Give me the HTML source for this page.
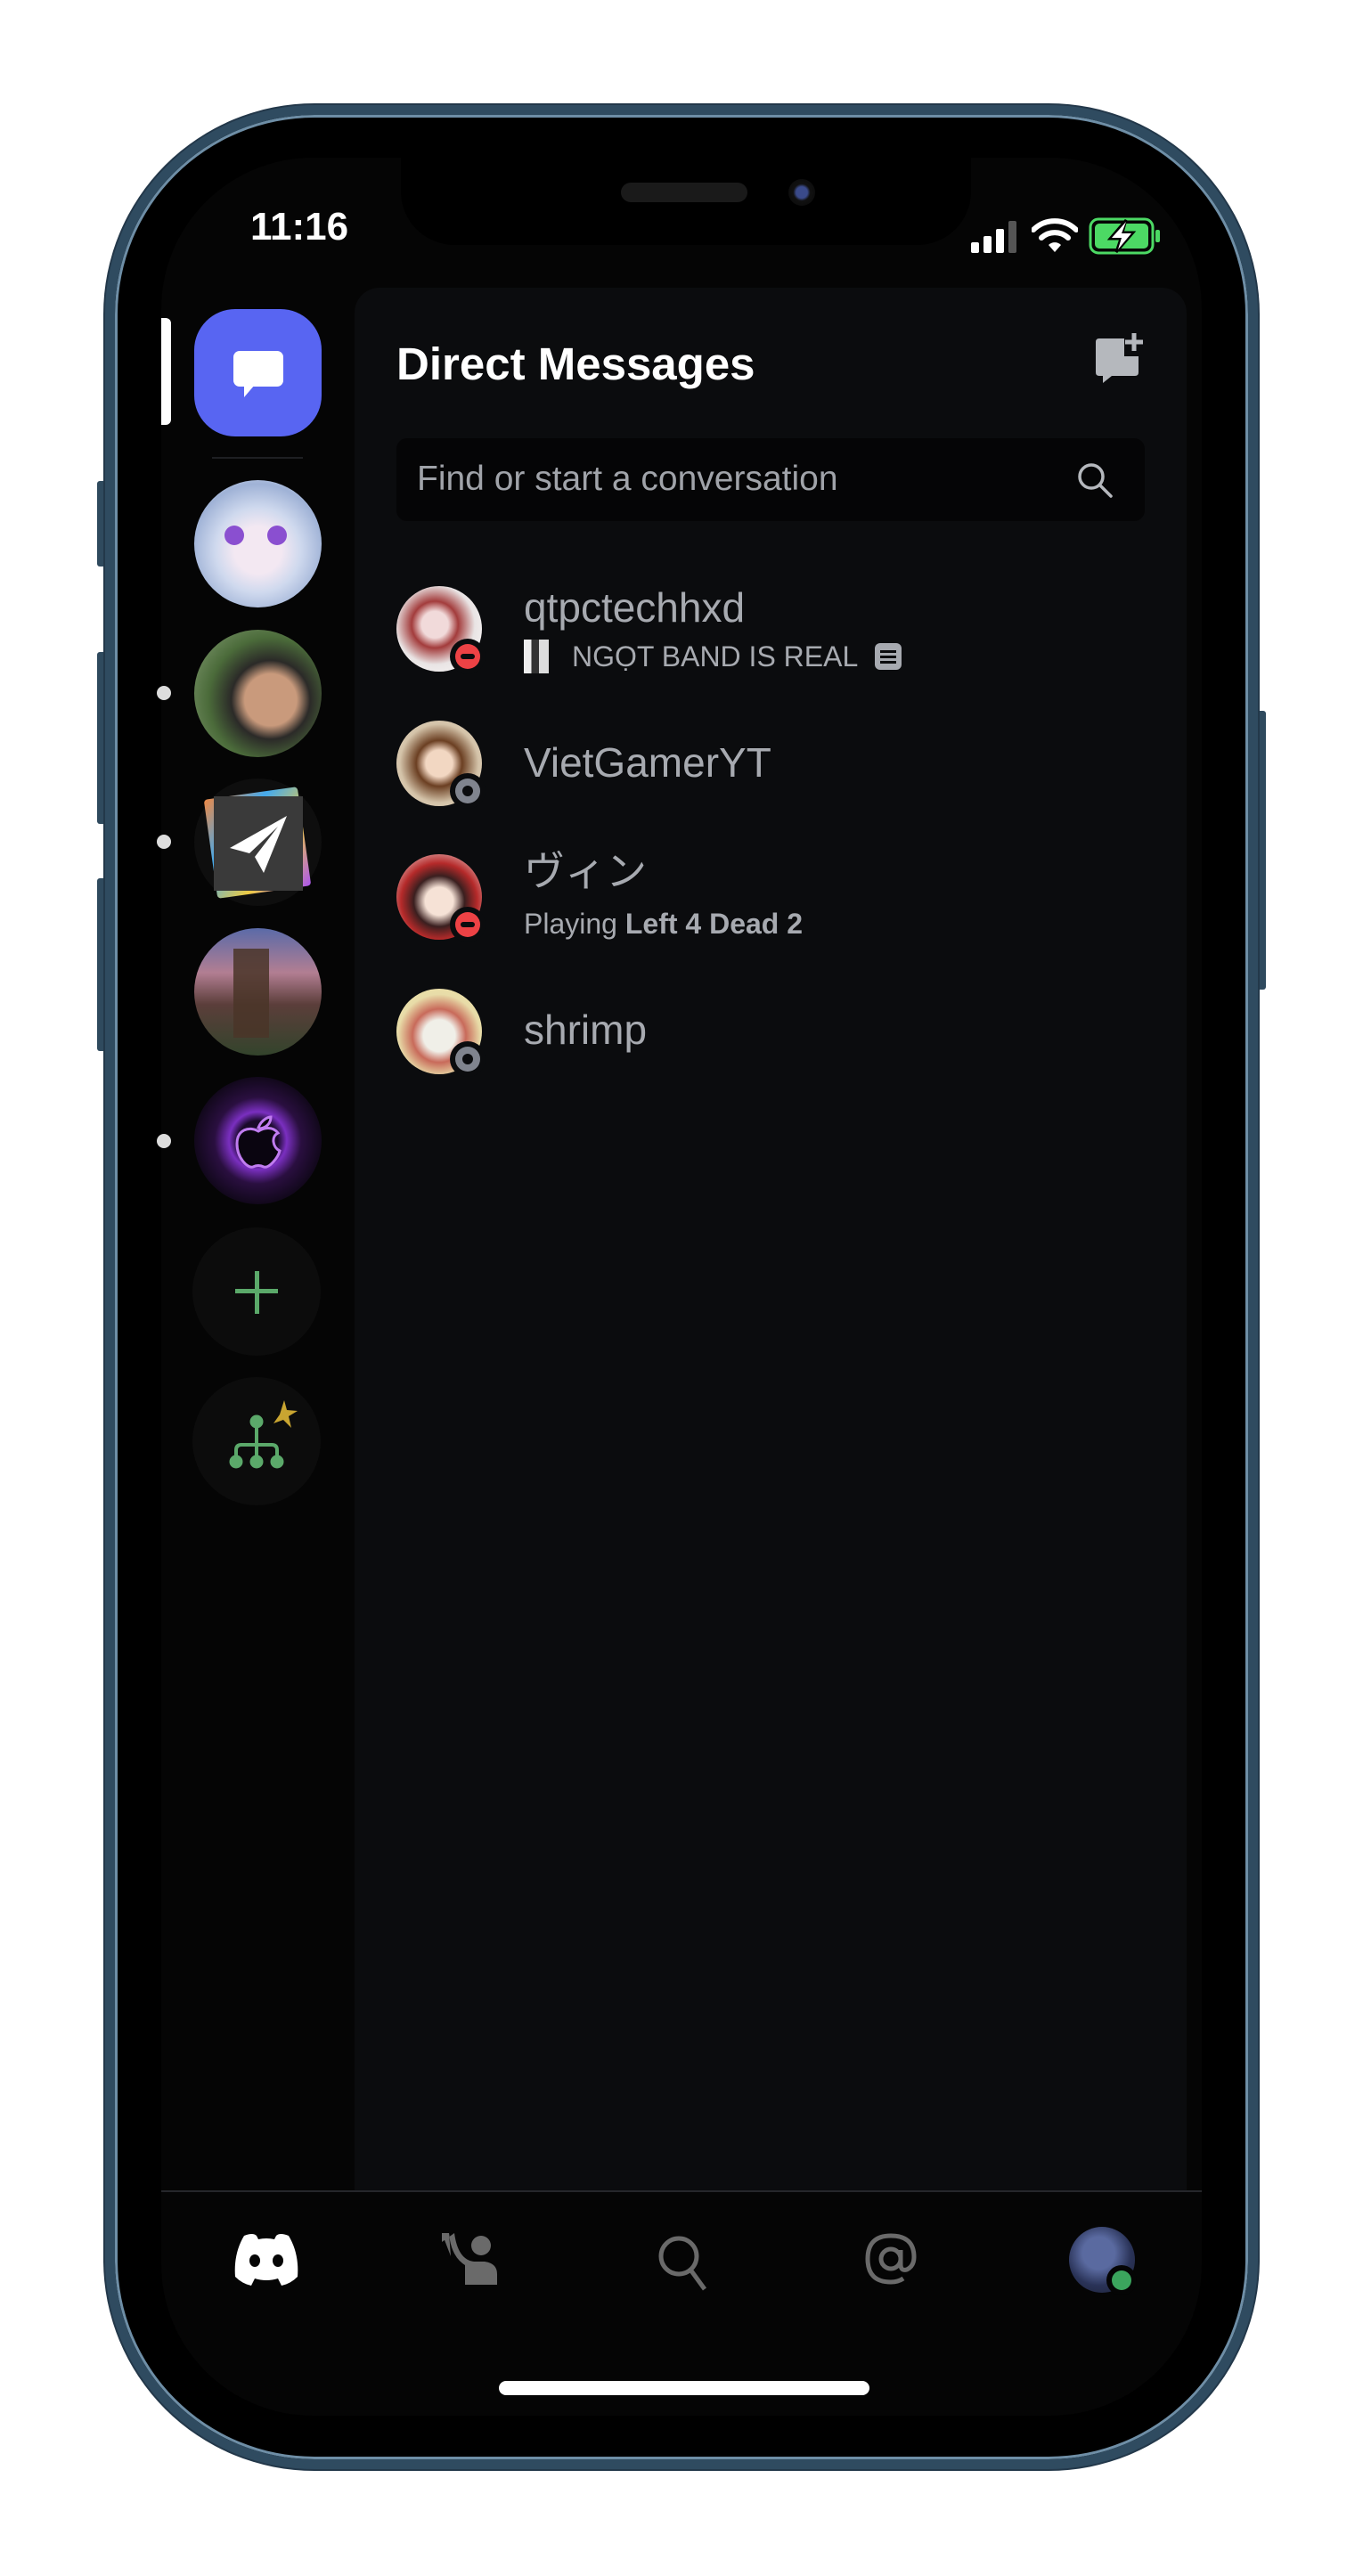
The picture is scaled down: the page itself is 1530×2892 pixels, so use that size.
<!DOCTYPE html>
<html><head><meta charset="utf-8"><style>
*{margin:0;padding:0;box-sizing:border-box}
body{width:1530px;height:2892px;background:#fff;position:relative;overflow:hidden;font-family:"Liberation Sans","Noto Sans CJK JP",sans-serif}
.abs{position:absolute}
.frame{left:118px;top:118px;width:1294px;height:2654px;border-radius:235px;background:#000;border:11px solid #2f4b60;box-shadow:inset 0 0 0 3px #6e8ea6, 0 0 0 2px #23384a}
.screen{left:181px;top:177px;width:1168px;height:2535px;border-radius:170px;background:#050505;overflow:hidden}
.btn{background:#2f4a5e;border-radius:3px}
.panel{left:398px;top:323px;width:934px;height:2137px;background:#0b0c0e;border-radius:28px 28px 0 0}
.circ{border-radius:50%}
.name{position:absolute;left:588px;color:#a7aab0;font-size:46px;line-height:1}
.sub{position:absolute;left:588px;color:#a7aab0;font-size:32px;line-height:1}
.badge{position:absolute;width:40px;height:40px;border-radius:50%;background:#0b0c0e}
.badge i{position:absolute;left:6px;top:6px;width:28px;height:28px;border-radius:50%}
</style></head><body>
<div class="abs btn" style="left:109px;top:540px;width:10px;height:96px"></div>
<div class="abs btn" style="left:109px;top:732px;width:10px;height:193px"></div>
<div class="abs btn" style="left:109px;top:986px;width:10px;height:194px"></div>
<div class="abs btn" style="left:1411px;top:798px;width:10px;height:313px"></div>
<div class="abs frame"></div>
<div class="abs screen"></div>
<div class="abs" style="left:450px;top:170px;width:640px;height:105px;background:#000;border-radius:0 0 60px 60px"></div>
<div class="abs" style="left:697px;top:205px;width:142px;height:22px;background:#1a1a1a;border-radius:11px"></div>
<div class="abs circ" style="left:885px;top:201px;width:30px;height:30px;background:radial-gradient(circle,#3a4a8a 0 30%,#111 45%,#080808)"></div>
<div class="abs" style="left:281px;top:230px;color:#fff;font-size:44px;font-weight:bold;letter-spacing:0px">11:16</div>
<svg class="abs" style="left:1090px;top:248px" width="56" height="36"><rect x="0" y="24" width="9" height="12" rx="2" fill="#fff"/><rect x="14" y="17" width="9" height="19" rx="2" fill="#fff"/><rect x="28" y="9" width="9" height="27" rx="2" fill="#fff"/><rect x="42" y="0" width="9" height="36" rx="2" fill="#555"/></svg>
<svg class="abs" style="left:1158px;top:245px" width="52" height="40" viewBox="0 0 52 40"><path d="M2 13 A34 34 0 0 1 50 13" stroke="#fff" stroke-width="6" fill="none" stroke-linecap="round"/><path d="M11 22 A22 22 0 0 1 41 22" stroke="#fff" stroke-width="6" fill="none" stroke-linecap="round"/><path d="M19 30 L26 38 L33 30 A10 10 0 0 0 19 30Z" fill="#fff"/></svg>
<svg class="abs" style="left:1222px;top:244px" width="82" height="42"><rect x="2" y="2" width="70" height="38" rx="9" fill="none" stroke="#4cd964" stroke-width="3"/><rect x="7" y="7" width="60" height="28" rx="5" fill="#4cd964"/><rect x="75" y="14" width="5" height="14" rx="2" fill="#4cd964"/><path d="M42 3 L24 24 H36 L31 39 L50 17 H38 Z" fill="#000" stroke="#000" stroke-width="3"/><path d="M42 5 L26 23 H37 L33 36 L48 18 H37 Z" fill="#fff"/></svg>
<div class="abs panel"></div>
<div class="abs" style="left:181px;top:357px;width:11px;height:120px;background:#fff;border-radius:0 6px 6px 0"></div>
<div class="abs" style="left:218px;top:347px;width:143px;height:143px;border-radius:46px;background:#5865f2"></div>
<svg class="abs" style="left:258px;top:388px" width="64" height="64" viewBox="0 0 64 64"><rect x="4" y="6" width="56" height="40" rx="7" fill="#fff"/><path d="M16 44 L16 58 L28 44Z" fill="#fff"/></svg>
<div class="abs" style="left:238px;top:513px;width:102px;height:2px;background:#1e1f22"></div>
<div class="abs circ" style="left:218px;top:539px;width:143px;height:143px;background:radial-gradient(circle at 50% 55%,#f3e8f2 0 25%,#cfd9ee 45%,#9fb2d6 70%,#e8eef7)"></div>
<div class="abs circ" style="left:252px;top:590px;width:22px;height:22px;background:#8a4fd0"></div>
<div class="abs circ" style="left:300px;top:590px;width:22px;height:22px;background:#8a4fd0"></div>
<div class="abs circ" style="left:218px;top:707px;width:143px;height:143px;background:radial-gradient(circle at 60% 55%,#c99a7c 0 25%,#2b2a28 38%,#4b6b3a 60%,#8aa27a)"></div>
<div class="abs circ" style="left:218px;top:874px;width:143px;height:143px;background:#0e0e0e"></div>
<div class="abs" style="left:236px;top:890px;width:106px;height:112px;background:linear-gradient(135deg,#e84 ,#4ae,#ec4,#a5e);transform:rotate(-8deg);border-radius:4px"></div>
<div class="abs" style="left:240px;top:894px;width:100px;height:106px;background:#3a3a3a"></div>
<svg class="abs" style="left:250px;top:908px" width="80" height="80" viewBox="0 0 80 80"><path d="M72 8 L8 44 L30 50 L62 20 L36 54 L46 72 Z" fill="#fff"/></svg>
<div class="abs circ" style="left:218px;top:1042px;width:143px;height:143px;background:linear-gradient(180deg,#5a6aa8 0%,#b27e92 35%,#5b3e3a 60%,#33442c 100%)"></div>
<div class="abs" style="left:262px;top:1065px;width:40px;height:100px;background:#4a3528;opacity:.85"></div>
<div class="abs circ" style="left:218px;top:1209px;width:143px;height:143px;background:radial-gradient(circle,#1a0a2a 0 22%,#7a2fc0 32%,#2a0f40 48%,#12081c 70%)"></div>
<svg class="abs" style="left:262px;top:1250px" width="56" height="64" viewBox="0 0 56 64"><path d="M28 16 C32 6 40 4 42 4 C42 10 38 16 30 17Z M28 20 C18 14 4 18 4 34 C4 50 16 62 22 60 C26 58 30 58 34 60 C40 62 50 50 52 42 C44 38 42 26 50 22 C44 14 34 16 28 20Z" fill="#0a0510" stroke="#c07cf0" stroke-width="3"/></svg>
<div class="abs circ" style="left:184px;top:770px;width:16px;height:16px;background:#ddd;margin-left:-8px"></div>
<div class="abs circ" style="left:184px;top:937px;width:16px;height:16px;background:#ddd;margin-left:-8px"></div>
<div class="abs circ" style="left:184px;top:1273px;width:16px;height:16px;background:#ddd;margin-left:-8px"></div>
<div class="abs circ" style="left:216px;top:1378px;width:144px;height:144px;background:#0c0c0c"></div>
<div class="abs" style="left:264px;top:1447px;width:48px;height:5px;background:#5ba96a"></div>
<div class="abs" style="left:286px;top:1427px;width:5px;height:48px;background:#5ba96a"></div>
<div class="abs circ" style="left:216px;top:1546px;width:144px;height:144px;background:#0c0c0c"></div>
<svg class="abs" style="left:255px;top:1570px" width="90" height="100" viewBox="0 0 90 100"><g fill="#5ba96a"><circle cx="33" cy="26" r="7.5"/><circle cx="10" cy="71" r="7.5"/><circle cx="33" cy="71" r="7.5"/><circle cx="56" cy="71" r="7.5"/></g><path d="M33 26 V71 M10 71 V58 Q10 52 16 52 H50 Q56 52 56 58 V71" stroke="#5ba96a" stroke-width="4" fill="none"/><path d="M64 2 L67 13 L79 14 L69 20 L72 33 L63 24 L52 28 L59 18 Z" fill="#c9a531"/></svg>
<div class="abs" style="left:445px;top:379px;color:#fff;font-size:51px;font-weight:bold">Direct Messages</div>
<svg class="abs" style="left:1226px;top:372px" width="62" height="60" viewBox="0 0 62 60"><path d="M4 12 Q4 8 8 8 H36 V28 H52 V46 Q52 50 48 50 H22 L12 58 V50 H8 Q4 50 4 46Z" fill="#b5b8bd"/><path d="M47 2 V22 M37 12 H57" stroke="#b5b8bd" stroke-width="5"/></svg>
<div class="abs" style="left:445px;top:492px;width:840px;height:93px;background:#050506;border-radius:12px"></div>
<div class="abs" style="left:468px;top:516px;color:#a0a3a9;font-size:39px">Find or start a conversation</div>
<svg class="abs" style="left:1207px;top:517px" width="44" height="44" viewBox="0 0 44 44"><circle cx="18" cy="18" r="13" stroke="#b5b8bd" stroke-width="3.5" fill="none"/><path d="M28 28 L40 40" stroke="#b5b8bd" stroke-width="3.5" stroke-linecap="round"/></svg>
<div class="abs circ" style="left:445px;top:658px;width:96px;height:96px;background:radial-gradient(circle at 45% 45%,#f1dada 0 20%,#a33c3c 35%,#e9e4e4 60%,#fff)"></div>
<div class="badge" style="left:505px;top:717px"><i style="background:#ed4245"></i><div class="abs" style="left:12px;top:17px;width:16px;height:6px;background:#0b0c0e;border-radius:3px"></div></div>
<div class="name" style="top:659px">qtpctechhxd</div>
<div class="abs" style="left:588px;top:718px;width:28px;height:38px;background:linear-gradient(90deg,#eee 0 30%,#333 30% 60%,#ddd 60%)"></div>
<div class="sub" style="left:642px;top:721px">NGỌT BAND IS REAL</div>
<div class="abs" style="left:982px;top:722px;width:30px;height:30px;background:#a7aab0;border-radius:6px"></div>
<div class="abs" style="left:988px;top:730px;width:18px;height:3px;background:#0b0c0e;box-shadow:0 6px 0 #0b0c0e,0 12px 0 #0b0c0e"></div>
<div class="abs circ" style="left:445px;top:809px;width:96px;height:96px;background:radial-gradient(circle at 50% 50%,#f2d7c2 0 22%,#6b3f22 38%,#d4c3a9 65%,#e8dcc6)"></div>
<div class="badge" style="left:505px;top:868px"><i style="background:#80848e"></i><div class="abs circ" style="left:14px;top:14px;width:12px;height:12px;background:#0b0c0e"></div></div>
<div class="name" style="top:833px">VietGamerYT</div>
<div class="abs circ" style="left:445px;top:959px;width:96px;height:96px;background:radial-gradient(circle at 50% 55%,#f6e2d6 0 22%,#3a1f1f 40%,#b52a2a 60%,#fff)"></div>
<div class="badge" style="left:505px;top:1018px"><i style="background:#ed4245"></i><div class="abs" style="left:12px;top:17px;width:16px;height:6px;background:#0b0c0e;border-radius:3px"></div></div>
<div class="name" style="top:955px">ヴィン</div>
<div class="sub" style="top:1021px">Playing <b>Left 4 Dead 2</b></div>
<div class="abs circ" style="left:445px;top:1110px;width:96px;height:96px;background:radial-gradient(circle at 50% 55%,#f0efe8 0 25%,#c86a5a 42%,#e8dca8 65%,#f0e6a8)"></div>
<div class="badge" style="left:505px;top:1169px"><i style="background:#80848e"></i><div class="abs circ" style="left:14px;top:14px;width:12px;height:12px;background:#0b0c0e"></div></div>
<div class="name" style="top:1133px">shrimp</div>
<div class="abs" style="left:181px;top:2459px;width:1168px;height:2px;background:#26272b"></div>
<svg class="abs" style="left:260px;top:2506px" width="78" height="60" viewBox="0 0 78 60"><path d="M14 4 Q24 0 28 4 L30 8 Q39 6 48 8 L50 4 Q54 0 64 4 Q76 24 74 50 Q66 58 56 60 L52 52 Q39 56 26 52 L22 60 Q12 58 4 50 Q2 24 14 4Z" fill="#fff"/><ellipse cx="26" cy="32" rx="6" ry="7" fill="#050505"/><ellipse cx="52" cy="32" rx="6" ry="7" fill="#050505"/></svg>
<svg class="abs" style="left:496px;top:2503px" width="64" height="64" viewBox="0 0 64 64"><path d="M0 14 V4 H8 Q10 30 26 40 V62 H62 V50 Q62 38 48 36 H36 Q18 34 14 4Z" fill="#6a6a6a"/><circle cx="44" cy="18" r="11" fill="#6a6a6a"/><path d="M0 4 L8 4 L10 30 Z" fill="#6a6a6a"/></svg>
<svg class="abs" style="left:735px;top:2506px" width="62" height="66" viewBox="0 0 62 66"><circle cx="27" cy="27" r="20" stroke="#6a6a6a" stroke-width="5" fill="none"/><path d="M40 42 L56 64" stroke="#6a6a6a" stroke-width="5"/></svg>
<svg class="abs" style="left:968px;top:2504px" width="64" height="64" viewBox="0 0 64 64"><circle cx="32" cy="32" r="11" stroke="#6a6a6a" stroke-width="5" fill="none"/><path d="M43 22 V38 Q43 46 50 44 Q58 40 58 30 Q58 6 32 6 Q6 6 6 32 Q6 58 32 58 Q40 58 46 54" stroke="#6a6a6a" stroke-width="5" fill="none"/></svg>
<div class="abs circ" style="left:1200px;top:2500px;width:74px;height:74px;background:radial-gradient(circle at 45% 40%,#5a6aa0 0 30%,#2a3358 60%,#1a1e30)"></div>
<div class="abs circ" style="left:1242px;top:2543px;width:34px;height:34px;background:#050505"></div>
<div class="abs circ" style="left:1248px;top:2549px;width:22px;height:22px;background:#3ba55d"></div>
<div class="abs" style="left:560px;top:2673px;width:416px;height:16px;background:#fff;border-radius:8px"></div>
</body></html>
